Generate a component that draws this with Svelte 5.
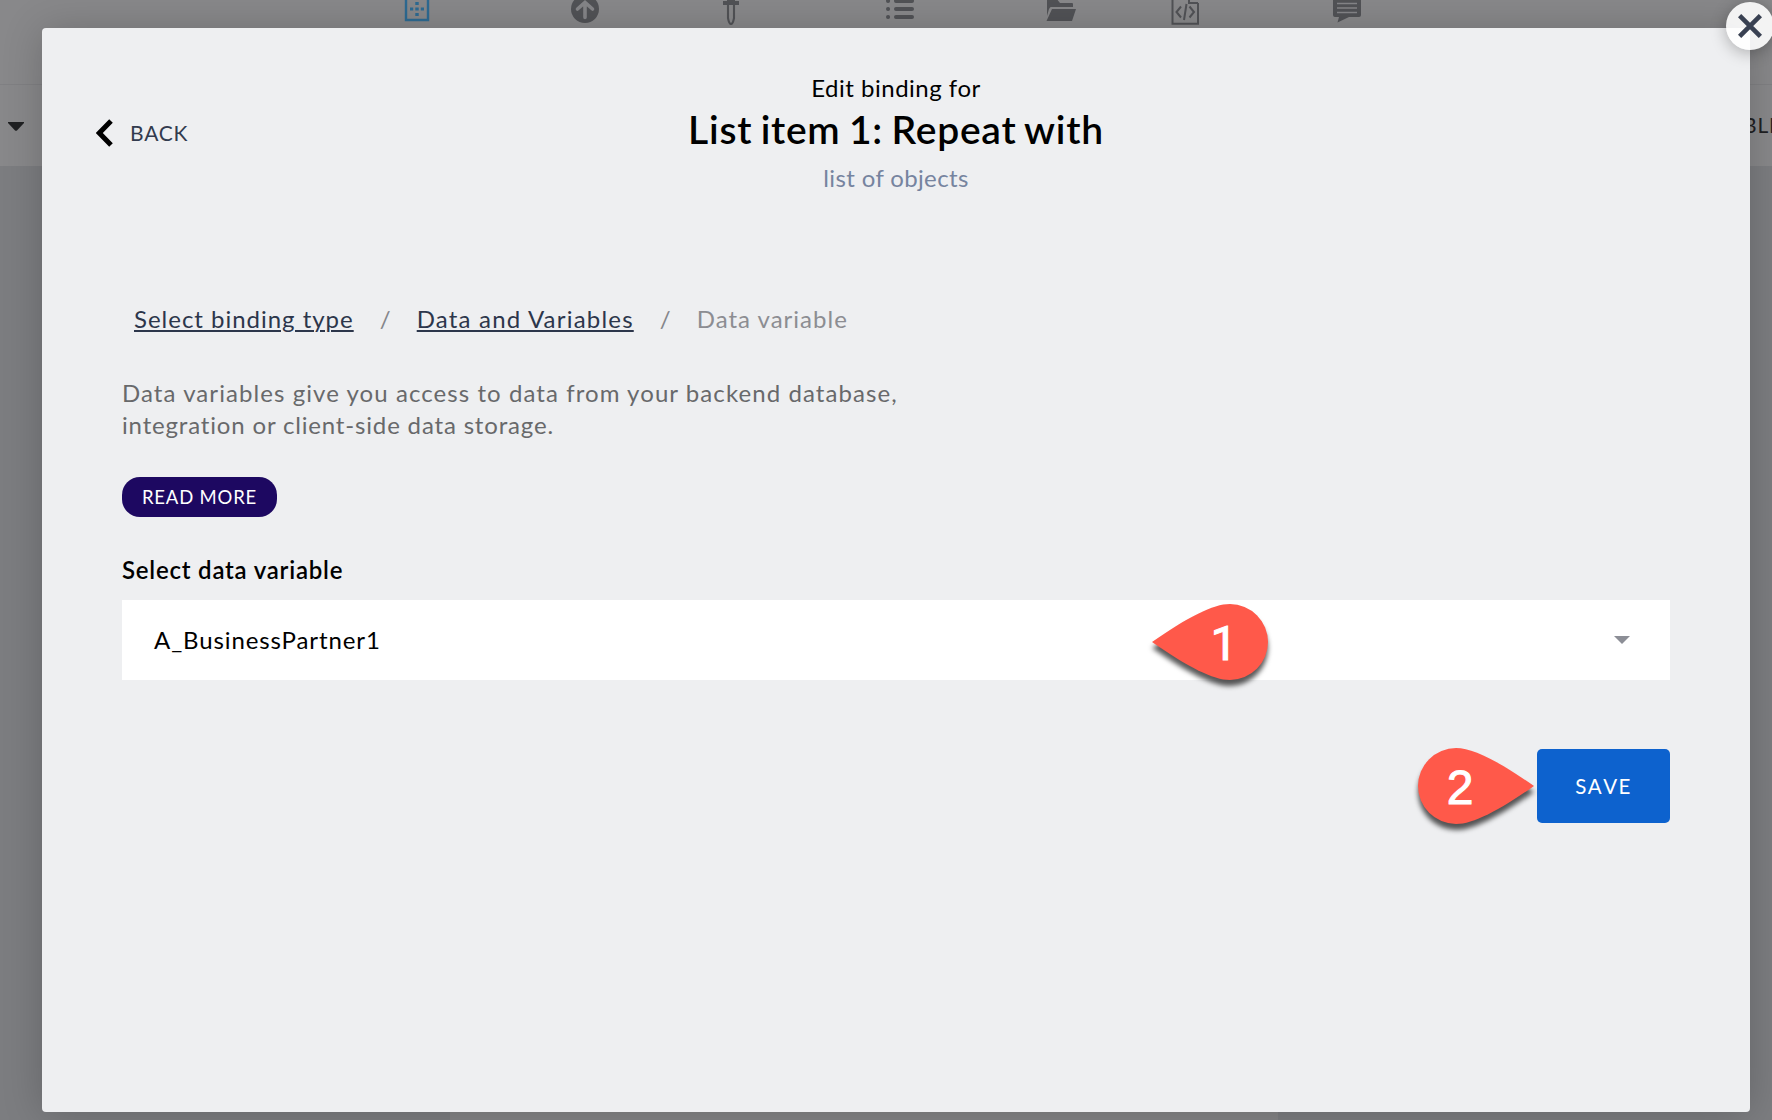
<script>
  let selected = $state('A_BusinessPartner1');
</script>

<div class="app">
  <div class="toolbar">
    <svg class="icon active" viewBox="-16 0 32 28">
      <path d="M-11-2V20H11V-2" fill="none" stroke="currentColor" stroke-width="2.4" />
      <path d="M-1.7 2h3.4v3h-3.4zM-1.7 7.5h3.4v3h-3.4zM-1.7 13h3.4v3h-3.4zM-7 7.5h3.2v3H-7zM3.8 7.5H7v3H3.8z" fill="currentColor" />
    </svg>
    <svg class="icon" viewBox="-16 0 32 28">
      <circle cx="0" cy="9" r="14" fill="currentColor" />
      <path d="M0 17.5V3M-7.5 9 0 2.5 7.5 9" fill="none" stroke="#858588" stroke-width="3.6" stroke-linecap="round" />
    </svg>
    <svg class="icon" viewBox="-16 0 32 28">
      <path d="M-8 1H8v4H-8zM-4-2h8v4h-8z" fill="currentColor" />
      <path d="M-3 4V18Q-2 24 0 24T3 18V4" fill="none" stroke="currentColor" stroke-width="2.1" />
    </svg>
    <svg class="icon" viewBox="-16 0 32 28">
      <g stroke="currentColor" stroke-width="4" stroke-linecap="round">
        <path d="M-12 1h.1M-12 9h.1M-12 17h.1M-4 1H12M-4 9H12M-4 17H12" />
      </g>
    </svg>
    <svg class="icon" viewBox="-16 0 32 28">
      <path d="M-14-2H-5L-1 3H11Q12 3 12 4V7H-10Q-11 7-12 9L-14 16ZM-9 9H15L11 21H-14.5Z" fill="currentColor" />
    </svg>
    <svg class="icon" viewBox="-16 0 32 28">
      <path d="M-12.5-2V23.7H13V3M4-2V3H13" fill="none" stroke="currentColor" stroke-width="2" />
      <path d="M-4 6.5-8.5 12-4 17.5M4.5 6.5 9 12 4.5 17.5M1.5 4-1 20" fill="none" stroke="currentColor" stroke-width="2" />
    </svg>
    <svg class="icon" viewBox="-16 0 32 28">
      <path d="M-14-2H14V15Q14 17 12 17H2L-9.500 22.500-8 17H-12Q-14 17-14 15Z" fill="currentColor" />
      <path d="M-10 3.500H10M-10 8H10M-10 12.500H10" stroke="#858588" stroke-width="1.6" />
    </svg>
  </div>
  <div class="subbar">
    <svg class="tree-caret" viewBox="0 0 16 9"><path d="M0 0H16V1L9 8.500Q8 9.200 7 8.500L0 1Z" /></svg>
    <span class="tab">BLE</span>
  </div>
  <div class="canvas"><div class="device"></div></div>

  <div class="modal">
    <button class="close" aria-label="Close">
      <svg viewBox="0 0 24 24"><path d="M1.600 1.600 22.400 22.400M22.400 1.600 1.600 22.400" /></svg>
    </button>

    <header>
      <button class="back">
        <svg viewBox="0 0 17 28"><path d="M15 2 3.300 14 15 26" /></svg>
        <span>BACK</span>
      </button>
      <div class="heading">
        <p class="eyebrow">Edit binding for</p>
        <h1>List item 1: Repeat with</h1>
        <p class="kind">list of objects</p>
      </div>
    </header>

    <main>
      <nav>
        <a class="first" href="#type">Select binding type</a>
        <span class="slash">/</span>
        <a class="second" href="#data">Data and Variables</a>
        <span class="slash">/</span>
        <span class="current">Data variable</span>
      </nav>

      <p class="description">
        Data variables give you access to data from your backend database,<br />
        <span>integration or client-side data storage.</span>
      </p>

      <button class="more">READ MORE</button>

      <h2>Select data variable</h2>
      <div class="select">
        <span>{selected}</span>
        <svg class="caret" viewBox="0 0 16 8"><path d="M0 0H16L8 8Z" /></svg>
        <div class="callout one">
          <svg viewBox="0 0 116 76"><path d="M0 38C36 13 61 0 78 0A38 38 0 0 1 78 76C61 76 36 63 0 38Z" /></svg>
          <b>1</b>
        </div>
      </div>

      <div class="actions">
        <button class="save">SAVE</button>
        <div class="callout two">
          <svg viewBox="0 0 116 76"><path d="M116 38C80 13 55 0 38 0A38 38 0 0 0 38 76C55 76 80 63 116 38Z" /></svg>
          <b>2</b>
        </div>
      </div>
    </main>
  </div>
</div>

<style>
  :global(body) {
    margin: 0;
  }
  .app {
    position: relative;
    display: flex;
    flex-direction: column;
    width: 1772px;
    height: 1120px;
    overflow: hidden;
    font-family: Lato, 'Liberation Sans', sans-serif;
    background: #7c7d80;
  }
  p,
  h1,
  h2 {
    margin: 0;
  }
  button {
    padding: 0;
    border: 0;
    background: none;
    font-family: inherit;
  }
  svg {
    display: block;
  }

  .toolbar {
    box-sizing: border-box;
    display: grid;
    grid-template-columns: 168px 168px 124px 214px 108px 140px 184px;
    justify-items: center;
    height: 85px;
    padding-left: 333px;
    background: #88888a;
    border-bottom: 1px solid #808083;
  }
  .icon {
    width: 32px;
    height: 28px;
    color: #515256;
  }
  .icon.active {
    color: #2d6a92;
  }
  .subbar {
    display: flex;
    justify-content: space-between;
    align-items: center;
    height: 81px;
    padding-left: 8px;
    background: #88888a;
  }
  .tree-caret {
    width: 16px;
    height: 9px;
    margin-top: 2px;
    fill: #1f2022;
  }
  .tab {
    width: 29px;
    padding-bottom: 3px;
    color: #1f2022;
    font-size: 21px;
    letter-spacing: 0.8px;
    white-space: nowrap;
  }
  .canvas {
    flex: 1;
    display: flex;
    padding-left: 450px;
    background: #7c7d80;
  }
  .device {
    width: 828px;
    background: #848486;
  }

  .modal {
    position: absolute;
    top: 28px;
    left: 42px;
    width: 1708px;
    height: 1084px;
    border-radius: 4px;
    background: #eeeff1;
    box-shadow: 0 2px 40px rgba(0, 0, 0, 0.2);
  }
  .close {
    position: absolute;
    top: -26px;
    right: -24px;
    display: grid;
    place-items: center;
    width: 48px;
    height: 48px;
    border-radius: 50%;
    background: rgba(255, 255, 255, 0.9);
    box-shadow: 0 3px 16px rgba(0, 0, 0, 0.28);
  }
  .close svg {
    width: 24px;
    height: 24px;
    fill: none;
    stroke: #394152;
    stroke-width: 4.6;
  }

  header {
    display: grid;
    grid-template-columns: 1fr auto 1fr;
    align-items: start;
    padding-top: 44px;
  }
  .back {
    display: flex;
    align-items: center;
    gap: 17px;
    margin: 47px 0 0 54px;
    color: #323b4e;
    font-size: 21px;
    line-height: 28px;
    letter-spacing: 0.8px;
  }
  .back svg {
    width: 17px;
    height: 28px;
    fill: none;
    stroke: #000;
    stroke-width: 5;
  }
  .heading {
    text-align: center;
    font-size: 24px;
    line-height: 32px;
  }
  .eyebrow {
    letter-spacing: 0.5px;
  }
  h1 {
    font-size: 39px;
    line-height: 50px;
    font-weight: 600;
    letter-spacing: 0.75px;
    word-spacing: -2px;
  }
  .kind {
    margin-top: 8px;
    color: #76849f;
    letter-spacing: 0.36px;
  }

  main {
    padding: 109px 80px 0;
  }
  nav {
    display: flex;
    padding-left: 12px;
    font-size: 24px;
    line-height: 32px;
  }
  nav a {
    color: #2c364b;
    text-decoration-thickness: 2px;
    text-underline-offset: 2px;
  }
  .first {
    letter-spacing: 0.98px;
  }
  .second {
    letter-spacing: 1.2px;
  }
  .slash {
    width: 63px;
    color: #85868b;
    text-align: center;
  }
  .current {
    color: #8c8d92;
    letter-spacing: 1px;
  }
  .description {
    margin-top: 42px;
    color: #68696b;
    font-size: 24px;
    line-height: 32px;
    letter-spacing: 1.07px;
  }
  .description span {
    letter-spacing: 0.83px;
  }
  .more {
    display: block;
    width: 155px;
    height: 40px;
    margin-top: 36px;
    border-radius: 18px;
    background: #1d0861;
    color: #fff;
    font-size: 18.5px;
    letter-spacing: 0.8px;
  }
  h2 {
    margin-top: 37px;
    font-size: 24px;
    line-height: 32px;
    font-weight: 600;
    letter-spacing: 0.78px;
  }
  .select {
    position: relative;
    box-sizing: border-box;
    display: flex;
    justify-content: space-between;
    align-items: center;
    height: 80px;
    margin-top: 14px;
    padding: 0 40px 0 32px;
    background: #fff;
    font-size: 24px;
    letter-spacing: 0.9px;
  }
  .select > span {
    padding-bottom: 2px;
  }
  .caret {
    width: 16px;
    height: 8px;
    fill: #8c8e96;
  }
  .actions {
    position: relative;
    display: flex;
    justify-content: flex-end;
    margin-top: 69px;
  }
  .save {
    width: 133px;
    height: 74px;
    border-radius: 5px;
    background: #0d62ce;
    color: #fff;
    font-size: 20.5px;
    letter-spacing: 1.5px;
    font-kerning: none;
  }

  /* Numbered markers pointing at the controls */
  .callout {
    position: absolute;
    width: 116px;
    height: 76px;
  }
  .callout svg {
    width: 116px;
    height: 76px;
    fill: #ff594a;
    filter: drop-shadow(0 6px 2.5px rgba(0, 0, 0, 0.65));
  }
  .callout b {
    position: absolute;
    width: 28px;
    color: #fff;
    font: 400 48px/56px 'Liberation Sans', sans-serif;
    letter-spacing: 0;
    text-align: center;
    -webkit-text-stroke: 1px #fff;
  }
  .one {
    top: 4px;
    left: 1030px;
  }
  .one b {
    top: 12px;
    left: 58px;
    font-family: Roboto, 'Liberation Sans', sans-serif;
  }
  .two {
    top: -1px;
    right: 136px;
  }
  .two b {
    top: 12px;
    left: 28px;
  }
</style>
